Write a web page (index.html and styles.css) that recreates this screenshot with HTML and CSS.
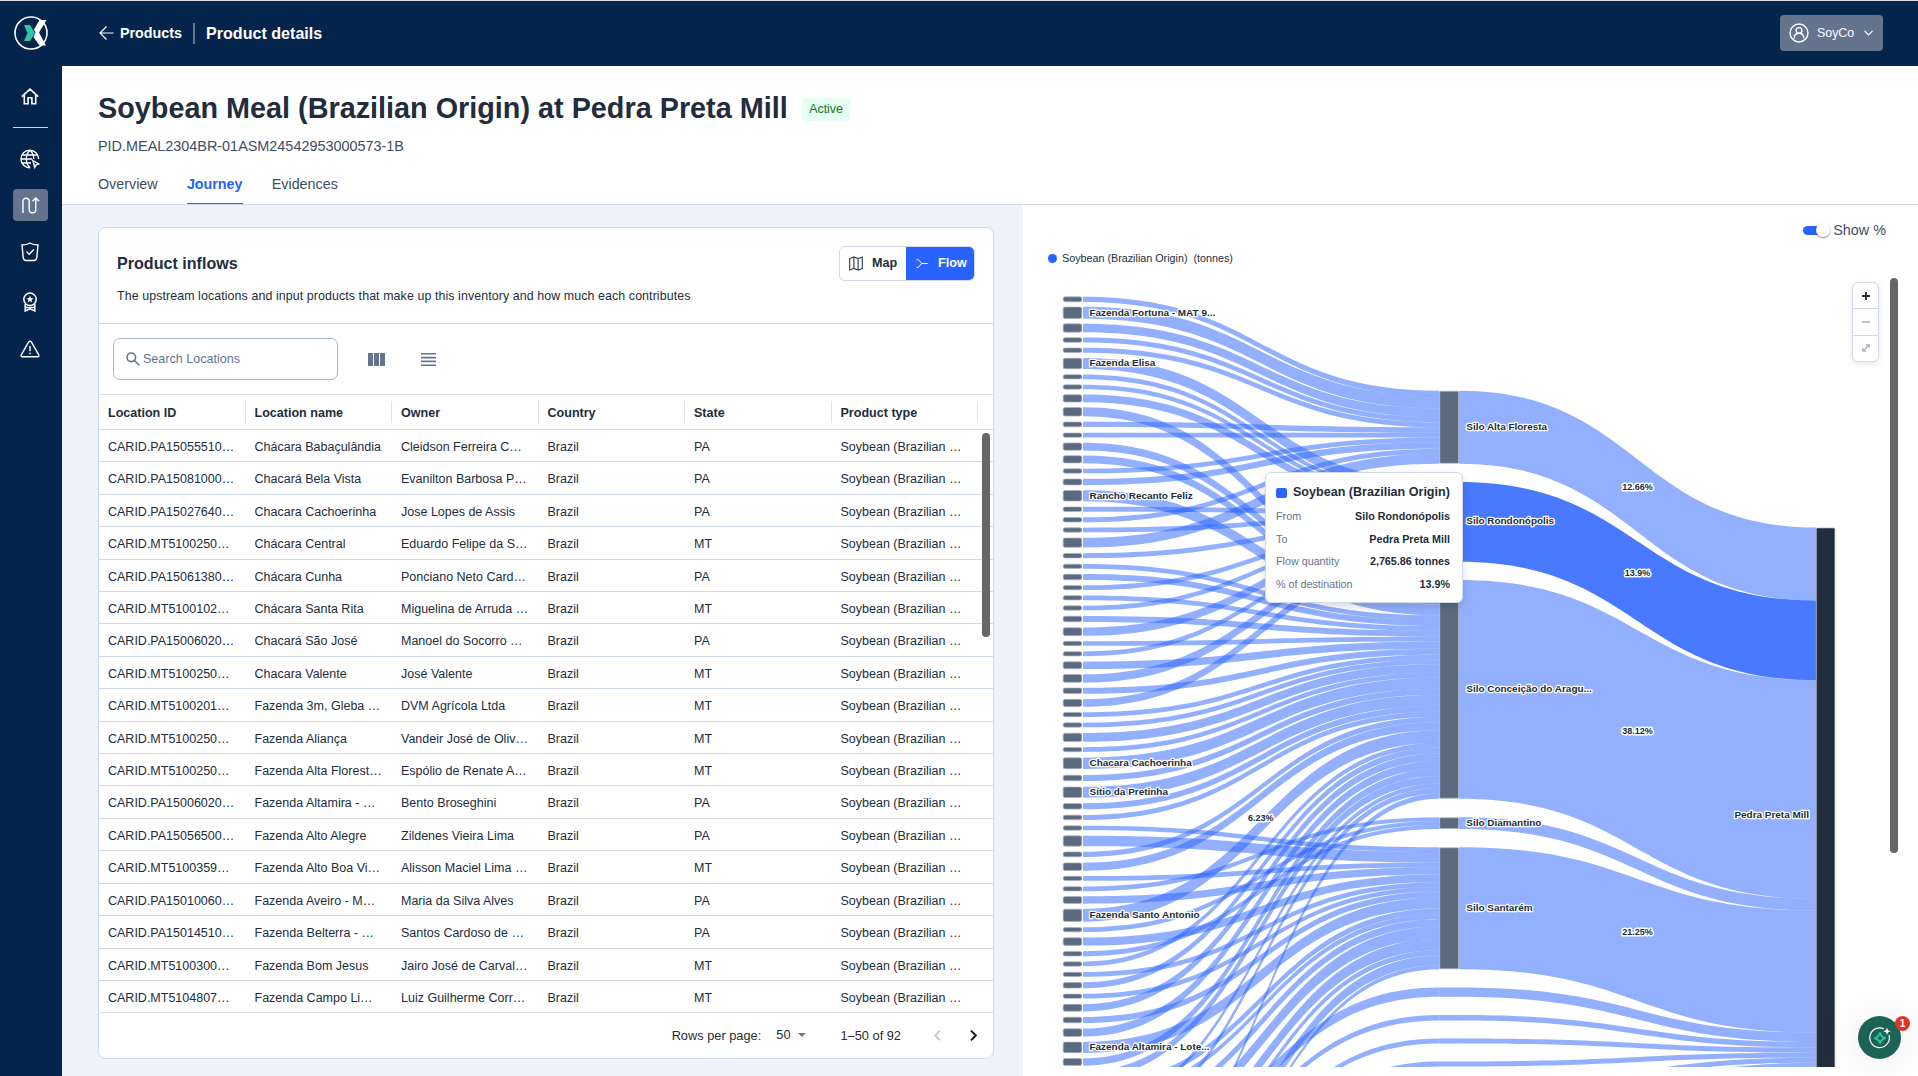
FILE: index.html
```html
<!DOCTYPE html>
<html lang="en">
<head>
  <meta charset="UTF-8">
  <meta name="viewport" content="width=device-width, initial-scale=1.0">
  <title>Product details</title>
  <link rel="stylesheet" href="styles.css">
</head>
<body>
  <header class="topbar">
    <div class="logo">
      <svg width="36" height="36" viewBox="0 0 36 36" fill="none">
        <circle cx="18" cy="18" r="16" stroke="#fff" stroke-width="1.6"/>
        <path d="M11 10h6l5 8-5 8h-6l3.500-8z" fill="#2ec4a6"/>
        <path d="M26.500 5h7l-7.500 12.500L33 30.500h-6.500L20.500 22l2-4.500-1.500-3z" fill="#fff"/>
      </svg>
    </div>
    <a class="back">
      <svg width="15" height="14" viewBox="0 0 15 14" fill="none" stroke="#fff" stroke-width="1.200"><path d="M14.500 7H1M7.500.5L1 7l6.500 6.500"/></svg>
      <span>Products</span>
    </a>
    <span class="topbar-divider"></span>
    <span class="topbar-title">Product details</span>
    <button class="account">
      <svg width="20" height="20" viewBox="0 0 20 20" fill="none" stroke="#fff" stroke-width="1.400">
        <circle cx="10" cy="10" r="9"/><circle cx="10" cy="7.500" r="2.900"/><path d="M5.200 15.500c0-3 1.600-5.200 4.800-5.200s4.800 2.200 4.800 5.200"/>
      </svg>
      <span>SoyCo</span>
      <svg width="9" height="6" viewBox="0 0 9 6" fill="none" stroke="#fff" stroke-width="1.200"><path d="M.5.8l4 4 4-4"/></svg>
    </button>
  </header>

  <div class="layout">
    <nav class="sidebar">
      <a class="nav-item home">
        <svg width="18" height="17" viewBox="0 0 18 17" fill="none" stroke="#fff" stroke-width="1.600"><path d="M.8 8.600L9 1.200l8.200 7.400M3.300 7v8.700h3.800V9.800h3.800v5.900h3.800V7"/></svg>
      </a>
      <span class="nav-divider"></span>
      <a class="nav-item globe">
        <svg width="20" height="20" viewBox="0 0 20 20" fill="none" stroke="#fff" stroke-width="1.400">
          <path d="M18.600 10A8.800 8.800 0 1 0 10 18.800M1.200 10h11M2.300 6h15.400M2.300 14H11M10 1.200C5 6 5 14 10 18.800M10 1.200c2.500 2.300 3.800 5.400 3.800 8.800"/>
          <path d="M12.800 11.500l6 3.500-2.700.8-1.300 2.500z"/>
        </svg>
      </a>
      <a class="nav-item active">
        <svg width="18" height="17" viewBox="0 0 18 17" fill="none" stroke="#fff" stroke-width="1.400"><path d="M1 16V4.500C1 2.500 2 1.200 4 1.200s3.200 1.300 3.200 3.300v8c0 2 1 3.300 3.200 3.300s3.400-1.300 3.400-3.300V1M10.500 4.300L13.800 1l3.300 3.300"/></svg>
      </a>
      <a class="nav-item shield">
        <svg width="18" height="20" viewBox="0 0 18 20" fill="none" stroke="#fff" stroke-width="1.400"><path d="M1 3c3 0 5.500-.5 8-2 2.500 1.500 5 2 8 2l-1.200 12.500c-.2 2-1.300 3-3 3H5.200c-1.700 0-2.800-1-3-3zM5.500 9.500l2.700 2.800 4.600-4.800"/></svg>
      </a>
      <a class="nav-item award">
        <svg width="14" height="20" viewBox="0 0 14 20" fill="none" stroke="#fff" stroke-width="1.500"><circle cx="7" cy="7.300" r="6.200"/><path d="M2.200 12v7L7 16.800l4.800 2.200v-7M2.500 15.500h9"/><path d="M7 3.800l1 2.300 2.500.2-1.900 1.600.6 2.500L7 9.100l-2.200 1.300.6-2.500-1.900-1.600 2.500-.2z" fill="#fff" stroke="none"/></svg>
      </a>
      <a class="nav-item">
        <svg width="20" height="18" viewBox="0 0 20 18" fill="none" stroke="#fff" stroke-width="1.400" stroke-linejoin="round"><path d="M10 1.200c.8 0 1.100.4 1.500 1l7.200 12.600c.6 1.200.1 2-1.200 2h-15c-1.300 0-1.800-.8-1.200-2L8.500 2.200c.4-.6.700-1 1.500-1zM10 6v5.300M10 12.800v1.400"/></svg>
      </a>
    </nav>

    <main class="main">
      <section class="page-head">
        <div class="title-row">
          <h1>Soybean Meal (Brazilian Origin) at Pedra Preta Mill</h1>
          <span class="badge">Active</span>
        </div>
        <p class="pid">PID.MEAL2304BR-01ASM24542953000573-1B</p>
        <div class="tabs">
          <a class="tab">Overview</a>
          <a class="tab selected">Journey</a>
          <a class="tab">Evidences</a>
        </div>
      </section>

      <div class="panes">
        <section class="left-pane">
          <div class="card">
            <div class="card-head">
              <div>
                <h2>Product inflows</h2>
                <p>The upstream locations and input products that make up this inventory and how much each contributes</p>
              </div>
              <div class="switcher">
                <button class="view-map">
                  <svg width="14" height="15" viewBox="0 0 14 15" fill="none" stroke="#33475b" stroke-width="1.200"><path d="M.7 2.500L4.900 1l4.200 1.500L13.300 1v11.500L9.100 14l-4.200-1.500L.7 14zM4.900 1v11.500M9.100 2.500V14"/></svg>
                  Map
                </button>
                <button class="view-flow">
                  <svg width="12" height="9" viewBox="0 0 12 9" fill="none" stroke="#fff" stroke-width="1"><path d="M.5.700h2l3.200 3.800h6M.5 8.300h2l3.200-3.800"/></svg>
                  Flow
                </button>
              </div>
            </div>

            <div class="toolbar">
              <div class="search">
                <svg width="14" height="14" viewBox="0 0 14 14" fill="none" stroke="#64748f" stroke-width="1.600"><circle cx="5.300" cy="5.300" r="4.300"/><path d="M8.500 8.500l4.800 4.800"/></svg>
                <span>Search Locations</span>
              </div>
              <svg class="tool-columns" width="17" height="13" viewBox="0 0 17 13" fill="#64748f"><path d="M0 0h5v13H0zM6 0h5v13H6zM12 0h5v13h-5z"/></svg>
              <svg class="tool-density" width="15" height="13" viewBox="0 0 15 13" fill="#64748f"><path d="M0 0h15v1.600H0zM0 3.800h15v1.600H0zM0 7.600h15v1.600H0zM0 11.400h15V13H0z"/></svg>
            </div>

            <div class="table">
              <div class="thead">
                <span>Location ID</span><span>Location name</span><span>Owner</span><span>Country</span><span>State</span><span>Product type</span>
              </div>
              <div id="rows"></div>
              <div class="table-scroll"></div>
            </div>

            <div class="pagination">
              <span class="rpp">Rows per page:</span>
              <span class="rpp-value">50</span>
              <span class="caret"></span>
              <span class="range">1–50 of 92</span>
              <svg class="prev" width="7" height="11" viewBox="0 0 7 11" fill="none" stroke="#bdbdbd" stroke-width="1.600"><path d="M6 .7L1.200 5.500 6 10.300"/></svg>
              <svg width="7" height="11" viewBox="0 0 7 11" fill="none" stroke="#111" stroke-width="1.900"><path d="M1 .7l4.800 4.800L1 10.300"/></svg>
            </div>
          </div>
        </section>

        <section class="right-pane">
          <div class="toggle-row">
            <span class="toggle"><span class="knob"></span></span>
            <span>Show %</span>
          </div>
          <div class="legend"><span class="dot"></span>Soybean (Brazilian Origin)&nbsp; (tonnes)</div>
          <div class="chart">
            <svg id="sankey" width="855" height="787" viewBox="1023 280 855 787"></svg>
            <div class="tooltip">
              <div class="tooltip-title"><span class="swatch"></span>Soybean (Brazilian Origin)</div>
              <div class="tooltip-row"><span>From</span><b>Silo Rondonópolis</b></div>
              <div class="tooltip-row"><span>To</span><b>Pedra Preta Mill</b></div>
              <div class="tooltip-row"><span>Flow quantity</span><b>2,765.86 tonnes</b></div>
              <div class="tooltip-row"><span>% of destination</span><b>13.9%</b></div>
            </div>
            <div class="zoom-controls">
              <span><svg width="8" height="8" viewBox="0 0 8 8" stroke="#212d3d" stroke-width="1.800"><path d="M4 0v8M0 4h8"/></svg></span>
              <span><svg width="8" height="8" viewBox="0 0 8 8" stroke="#a3afc2" stroke-width="1.500"><path d="M0 4h8"/></svg></span>
              <span><svg width="8" height="8" viewBox="0 0 8 8" fill="none" stroke="#a3afc2" stroke-width="1.200"><path d="M1 7l6-6M4 .8h3.200V4M4 7.200H.8V4"/></svg></span>
            </div>
            <div class="chart-scroll"></div>
          </div>
        </section>
      </div>
    </main>
  </div>

  <div class="assistant">
    <svg width="22" height="22" viewBox="0 0 22 22" fill="none">
      <path d="M20 8a9.800 9.800 0 1 1-5-6" stroke="#fff" stroke-width="1.200"/>
      <path d="M11 5.500c.7 3.300 2 4.700 5.500 5.500-3.500.8-4.800 2.200-5.500 5.500-.7-3.300-2-4.700-5.500-5.500 3.500-.8 4.800-2.200 5.500-5.500z" stroke="#2ec4a6" stroke-width="1.900"/>
      <path d="M18 .5l1 2.700 2.800 1-2.800 1L18 8l-1-2.800-2.800-1 2.800-1z" fill="#fff"/>
    </svg>
    <span class="count">1</span>
  </div>

  <script src="script.js"></script>
</body>
</html>
```
FILE: styles.css
```css
* {
  box-sizing: border-box;
}
body {
  margin: 0;
  height: 1076px;
  overflow: hidden;
  display: flex;
  flex-direction: column;
  font-family: "Liberation Sans", Arial, sans-serif;
  color: #212d3d;
  background: #fff;
}
h1, h2, p {
  margin: 0;
}
button {
  font-family: inherit;
  border: none;
}
svg {
  display: block;
  flex: none;
}

/* top bar */
.topbar {
  height: 66px;
  flex: none;
  display: flex;
  align-items: center;
  padding-bottom: 1px;
  background: #04244c;
  border-top: 1px solid #d8dbdf;
  color: #fff;
  font-weight: bold;
}
.logo {
  width: 62px;
  padding-left: 13px;
}
.back {
  display: flex;
  align-items: center;
  gap: 6px;
  margin-left: 37px;
  font-size: 14.300px;
}
.topbar-divider {
  width: 2px;
  height: 21px;
  margin: 0 11px 0 11px;
  background: #64748f;
}
.topbar-title {
  font-size: 16.100px;
}
.account {
  display: flex;
  align-items: center;
  width: 103px;
  height: 36px;
  margin-left: auto;
  margin-right: 35px;
  padding: 0 10px 0 9px;
  border-radius: 4px;
  background: #64748f;
  color: #fff;
  font-size: 12.400px;
}
.account span {
  margin-left: 8px;
  margin-right: auto;
}

/* sidebar */
.layout {
  flex: 1;
  display: flex;
  min-height: 0;
}
.sidebar {
  width: 62px;
  flex: none;
  display: flex;
  flex-direction: column;
  align-items: center;
  padding: 14px 1px 0 0;
  background: #04244c;
}
.nav-item {
  width: 35px;
  height: 32px;
  display: flex;
  align-items: center;
  justify-content: center;
  border-radius: 4px;
  margin-bottom: 15px;
  margin-right: 2px;
}
.nav-divider {
  width: 35px;
  height: 1px;
  background: #cbd5e3;
  margin-bottom: 15px;
}
.nav-item.active {
  margin-right: 0;
  background: #64748f;
}
.nav-item.globe {
  margin-bottom: 14px;
}
.nav-item.shield {
  margin-bottom: 18px;
}

/* page heading */
.main {
  flex: 1;
  display: flex;
  flex-direction: column;
  min-width: 0;
}
.page-head {
  height: 139px;
  flex: none;
  display: flex;
  flex-direction: column;
  padding: 23px 36px 0;
  border-bottom: 1px solid #d0dae8;
}
.title-row {
  display: flex;
  align-items: center;
  height: 38px;
}
h1 {
  font-size: 28.800px;
  line-height: 38px;
  white-space: nowrap;
}
.badge {
  margin: 2px 0 0 14px;
  padding: 0 7.500px;
  line-height: 23px;
  border-radius: 4px;
  background: #e6fdf3;
  color: #0c7a1f;
  font-size: 12.400px;
}
.pid {
  margin-top: 10px;
  font-size: 14.420px;
  line-height: 18px;
  color: #3d4e63;
}
.tabs {
  display: flex;
  gap: 29.300px;
  margin-top: auto;
}
.tab {
  height: 30px;
  font-size: 14.300px;
  line-height: 21px;
  color: #3d4e63;
}
.tab.selected {
  color: #2563fa;
  font-weight: bold;
  border-bottom: 1px solid #2563fa;
}

/* inflows card */
.panes {
  flex: 1;
  display: flex;
  min-height: 0;
}
.left-pane {
  width: 961px;
  flex: none;
  padding: 22px 29px 17px 36px;
  background: #edf2fb;
}
.card {
  height: 832px;
  display: flex;
  flex-direction: column;
  border: 1px solid #d0dae8;
  border-radius: 8px;
  background: #fff;
}
.card-head {
  height: 96px;
  display: flex;
  justify-content: space-between;
  padding: 18px 18px 0;
  border-bottom: 1px solid #d0dae8;
}
h2 {
  margin-top: 6px;
  font-size: 16.100px;
  line-height: 22px;
}
.card-head p {
  margin-top: 14px;
  font-size: 12.400px;
  letter-spacing: 0.095px;
  line-height: 16px;
}
.switcher {
  display: flex;
  width: 136px;
  height: 35px;
  border: 1px solid #d0dae8;
  border-radius: 6px;
  overflow: hidden;
}
.switcher button {
  display: flex;
  align-items: center;
  padding: 0 0 1px;
  background: #fff;
  color: #212d3d;
  font-size: 12.600px;
  font-weight: bold;
}
.switcher .view-map {
  width: 66px;
  padding-left: 9px;
  gap: 9px;
}
.switcher .view-flow {
  width: 68px;
  padding-left: 10px;
  gap: 10px;
  background: #2862ff;
  color: #fff;
}
.toolbar {
  height: 71px;
  display: flex;
  align-items: center;
  padding-left: 14px;
  border-bottom: 1px solid #d9dee6;
}
.search {
  width: 225px;
  height: 42px;
  display: flex;
  align-items: center;
  gap: 3px;
  padding-left: 12px;
  border: 1px solid #a9b6ca;
  border-radius: 7px;
  color: #64748f;
  font-size: 12.550px;
}
.tool-columns {
  margin-left: 30px;
}
.tool-density {
  margin-left: 36px;
}
.table {
  position: relative;
  height: 618px;
  overflow: hidden;
  border-bottom: 1px solid #d9dee6;
}
.thead, .row {
  display: grid;
  grid-template-columns: repeat(6, 146.500px);
  padding-left: 9px;
  border-bottom: 1px solid #d0dae8;
  white-space: nowrap;
}
.thead {
  height: 35px;
  align-items: center;
  font-size: 12.550px;
  font-weight: bold;
}
.thead span {
  margin-right: 9px;
  padding-top: 2px;
  line-height: 20px;
  border-right: 1px solid #dde4ee;
}
.row {
  height: 32.410px;
  line-height: 35px;
  font-size: 12.500px;
}
.table-scroll {
  position: absolute;
  top: 38px;
  right: 3px;
  width: 8px;
  height: 204px;
  border-radius: 4px;
  background: #666;
}
.pagination {
  flex: 1;
  display: flex;
  align-items: center;
  justify-content: flex-end;
  padding: 0 16px 1px 0;
  font-size: 12.800px;
  color: #2b2b2b;
}
.rpp {
  margin-right: 15px;
}
.rpp-value {
  margin-right: 7px;
  padding-bottom: 2px;
}
.caret {
  border: 4.500px solid transparent;
  border-top-color: #757575;
  border-bottom: none;
  margin-right: 35px;
}
.prev {
  margin: 0 29px 0 33px;
}

/* flow chart */
.right-pane {
  flex: 1;
  min-width: 0;
}
.toggle-row {
  height: 41px;
  display: flex;
  align-items: center;
  gap: 3px;
  padding: 9px 32px 0 0;
  justify-content: flex-end;
  color: #3d4e63;
  font-size: 14.400px;
}
.toggle {
  display: flex;
  align-items: center;
  justify-content: flex-end;
  width: 27px;
  height: 9px;
  border-radius: 5px;
  background: linear-gradient(90deg, #2862ff 70%, transparent 70%);
}
.knob {
  width: 14px;
  height: 14px;
  border-radius: 50%;
  background: #fff;
  box-shadow: 0 1px 2px rgba(0, 0, 0, 0.45);
}
.legend {
  height: 34px;
  display: flex;
  align-items: center;
  padding: 0 0 10px 25px;
  font-size: 10.750px;
}
.dot {
  width: 9px;
  height: 9px;
  margin-right: 5px;
  border-radius: 50%;
  background: #2862ff;
}
.chart {
  position: relative;
}
#sankey text {
  font-weight: bold;
  font-size: 9.950px;
  fill: #212d3d;
  stroke: #fff;
  stroke-width: 2.500px;
  stroke-linejoin: round;
  paint-order: stroke;
}
#sankey text.pct {
  font-size: 9px;
  stroke-width: 3px;
}
.link {
  fill: #2862ff;
  fill-opacity: 0.5;
}
.link.hover {
  fill-opacity: 0.85;
}
.node {
  fill: #5c6a80;
  stroke: #a8b2c2;
  stroke-width: 0.700px;
}
.node.mill {
  fill: #212d3d;
}
.tooltip {
  position: absolute;
  left: 242px;
  top: 192px;
  width: 198px;
  height: 131px;
  padding: 7px 12px 0 10px;
  border: 1px solid #d0dae8;
  border-radius: 6px;
  background: #fff;
  box-shadow: 0 4px 10px rgba(0, 0, 0, 0.14);
}
.tooltip-title {
  display: flex;
  align-items: center;
  height: 24px;
  margin-bottom: 1px;
  font-size: 12.560px;
  font-weight: bold;
  white-space: nowrap;
}
.swatch {
  width: 11px;
  height: 10px;
  margin: 2px 6px 0 0;
  border-radius: 2px;
  background: #2862ff;
}
.tooltip-row {
  display: flex;
  justify-content: space-between;
  line-height: 22.500px;
  font-size: 10.750px;
}
.tooltip-row span {
  color: #64748f;
}
.zoom-controls {
  position: absolute;
  left: 829px;
  top: 2px;
  width: 27px;
  height: 80px;
  display: flex;
  flex-direction: column;
  border: 1px solid #d0dae8;
  border-radius: 6px;
  background: #fff;
  box-shadow: 0 2px 6px rgba(0, 0, 0, 0.1);
}
.zoom-controls span {
  flex: 1;
  display: flex;
  align-items: center;
  justify-content: center;
}
.zoom-controls span + span {
  border-top: 1px solid #d0dae8;
}
.chart-scroll {
  position: absolute;
  left: 867px;
  top: -2px;
  width: 8px;
  height: 575px;
  border-radius: 4px;
  background: #666;
}

/* chat bubble */
.assistant {
  position: absolute;
  right: 17px;
  bottom: 17px;
  width: 43px;
  height: 43px;
  display: flex;
  align-items: center;
  justify-content: center;
  border-radius: 50%;
  background: #1b6355;
  box-shadow: 0 2px 40px 6px rgba(0, 0, 0, 0.07);
}
.count {
  position: absolute;
  right: -9px;
  top: 0;
  width: 15px;
  height: 15px;
  border-radius: 50%;
  background: #e0342b;
  color: #fff;
  font-size: 10px;
  font-weight: bold;
  line-height: 15px;
  text-align: center;
}
```
FILE: script.js
```js
const locations = [
  ['PA15055510', 'Chácara Babaçulândia', 'Cleidson Ferreira C…', 'PA'],
  ['PA15081000', 'Chacará Bela Vista', 'Evanilton Barbosa P…', 'PA'],
  ['PA15027640', 'Chacara Cachoerinha', 'Jose Lopes de Assis', 'PA'],
  ['MT5100250', 'Chácara Central', 'Eduardo Felipe da S…', 'MT'],
  ['PA15061380', 'Chácara Cunha', 'Ponciano Neto Card…', 'PA'],
  ['MT5100102', 'Chácara Santa Rita', 'Miguelina de Arruda …', 'MT'],
  ['PA15006020', 'Chacará São José', 'Manoel do Socorro …', 'PA'],
  ['MT5100250', 'Chacara Valente', 'José Valente', 'MT'],
  ['MT5100201', 'Fazenda 3m, Gleba …', 'DVM Agrícola Ltda', 'MT'],
  ['MT5100250', 'Fazenda Aliança', 'Vandeir José de Oliv…', 'MT'],
  ['MT5100250', 'Fazenda Alta Florest…', 'Espólio de Renate A…', 'MT'],
  ['PA15006020', 'Fazenda Altamira - …', 'Bento Broseghini', 'PA'],
  ['PA15056500', 'Fazenda Alto Alegre', 'Zildenes Vieira Lima', 'PA'],
  ['MT5100359', 'Fazenda Alto Boa Vi…', 'Alisson Maciel Lima …', 'MT'],
  ['PA15010060', 'Fazenda Aveiro - M…', 'Maria da Silva Alves', 'PA'],
  ['PA15014510', 'Fazenda Belterra - …', 'Santos Cardoso de …', 'PA'],
  ['MT5100300', 'Fazenda Bom Jesus', 'Jairo José de Carval…', 'MT'],
  ['MT5104807', 'Fazenda Campo Li…', 'Luiz Guilherme Corr…', 'MT']
];

document.getElementById('rows').innerHTML = locations.map(([id, name, owner, state]) =>
  `<div class="row"><span>CARID.${id}…</span><span>${name}</span><span>${owner}</span>` +
  `<span>Brazil</span><span>${state}</span><span>Soybean (Brazilian …</span></div>`
).join('');

// silos: top and bottom of the bar, label, share of the mill
const silos = {
  AF: { y0: 390.7, y1: 463.7, label: 'Silo Alta Floresta', pct: '12.66%' },
  RO: { y0: 482, y1: 561.7, label: 'Silo Rondonópolis', pct: '13.9%', hover: true },
  CA: { y0: 580, y1: 798.7, label: 'Silo Conceição do Aragu...', pct: '38.12%' },
  DI: { y0: 817.3, y1: 829, label: 'Silo Diamantino' },
  SA: { y0: 847.3, y1: 969.3, label: 'Silo Santarém', pct: '21.25%' },
  P1: { y0: 987.5, y1: 996.8, pass: true },
  P2: { y0: 1015, y1: 1020.6, pass: true },
  P3: { y0: 1038.4, y1: 1043.6, pass: true },
  P4: { y0: 1061.5, y1: 1066.5, pass: true },
  P5: { y0: 1085, y1: 1090, pass: true },
  P6: { y0: 1109, y1: 1114, pass: true },
  P7: { y0: 1133, y1: 1138, pass: true }
};

// farms: centre, thickness, silo, label
const farms = [
  [299.3, 5.3, 'AF'], [312.8, 12, 'AF', 'Fazenda Fortuna - MAT 9...'], [328, 8.7, 'AF'], [340, 5, 'AF'],
  [350.3, 5, 'AF'], [363.5, 11, 'RO', 'Fazenda Elisa'], [376.8, 4.7, 'RO'], [387, 4.7, 'RO'],
  [398.4, 7.7, 'RO'], [411.8, 9, 'CA'], [424.4, 5.3, 'AF'], [435.2, 4.7, 'AF'],
  [446.6, 7.7, 'CA'], [459.3, 7.7, 'CA'], [471, 4.7, 'AF'], [482, 6.3, 'AF'],
  [495.8, 11, 'CA', 'Rancho Recanto Feliz'], [509.2, 5, 'RO'], [519.8, 5, 'AF'], [530, 4.7, 'RO'],
  [542.7, 9.7, 'AF'], [555.7, 5, 'RO'], [566.3, 4.7, 'CA'], [577, 6, 'CA'],
  [587.7, 4.7, 'RO'], [597.8, 4.7, 'CA'], [608, 4.7, 'RO'], [619, 6, 'CA'],
  [631.7, 8.3, 'RO'], [643.5, 4.7, 'CA'], [653.8, 4.7, 'RO'], [665.3, 7.3, 'CA'],
  [678.4, 8.3, 'RO'], [690.8, 6, 'CA'], [703, 7.7, 'RO'], [714.6, 4.7, 'CA'],
  [725, 4.7, 'CA'], [737.4, 8.7, 'CA'], [749.6, 4.7, 'CA'], [763.3, 11.3, 'CA', 'Chacara Cachoerinha'],
  [778, 6, 'CA'], [792.3, 11, 'CA', 'Sítio da Pretinha'], [806.3, 6, 'CA'], [817.5, 5, 'CA'],
  [828, 4.7, 'SA'], [841, 10.7, 'SA'], [854.4, 5.3, 'CA'], [866.7, 8, 'CA'],
  [878.4, 4.7, 'SA'], [888.8, 4.7, 'DI'], [900, 7.3, 'SA'], [915.3, 12.7, 'CA', 'Fazenda Santo Antonio', '6.23%'],
  [929.7, 4.7, 'DI'], [941.6, 8, 'SA'], [953.7, 5, 'DI'], [964, 4.7, 'CA'],
  [974.4, 4.7, 'SA'], [985.3, 6, 'CA'], [996.2, 4.7, 'SA'], [1007.8, 7.3, 'CA'],
  [1020, 6, 'SA'], [1032.6, 8, 'CA'], [1047.4, 11, 'SA', 'Fazenda Altamira - Lote...'], [1062, 7.3, 'CA'],
  [1075, 7.3, 'CA'], [1087.5, 6, 'SA'], [1099, 5, 'SA'], [1109.5, 4.7, 'CA'],
  [1121.5, 7.3, 'SA'], [1133.5, 5.3, 'CA'], [1148, 12.3, 'SA'], [1166.5, 9.3, 'P1'],
  [1179.5, 11.7, 'SA'], [1193, 5.5, 'P2'], [1204.5, 5.3, 'SA'], [1215.5, 5.3, 'CA'],
  [1224.5, 5, 'P3'], [1237, 10, 'SA'], [1250, 5, 'P4'], [1260, 4, 'SA']
];

const X0 = 1083, X1 = 1439.5, X2 = 1459, X3 = 1816;
const MILL_TOP = 527.5;

function ribbon(xa, a0, a1, xb, b0, b1, cls) {
  const m = (xa + xb) / 2;
  return `<path class="${cls}" d="M${xa} ${a0}C${m} ${a0} ${m} ${b0} ${xb} ${b0}V${b1}C${m} ${b1} ${m} ${a1} ${xa} ${a1}Z"/>`;
}

function drawSankey() {
  let links = '', nodes = '', labels = '';
  const total = {}, used = {};
  farms.forEach(([, h, s]) => { total[s] = (total[s] || 0) + h; });

  farms.forEach(([y, h, s, label, pct]) => {
    const silo = silos[s];
    const hb = h * (silo.y1 - silo.y0) / total[s];
    const b0 = silo.y0 + (used[s] || 0);
    used[s] = (used[s] || 0) + hb;
    links += ribbon(X0, y - h / 2, y + h / 2, X1, b0, b0 + hb, 'link');
    nodes += `<rect class="node" x="1063.2" y="${y - h / 2 + 0.2}" width="18.6" height="${h - 0.4}" rx="1.8"/>`;
    if (label) labels += `<text x="1089.5" y="${y + 2.7}">${label}</text>`;
    if (pct) labels += `<text class="pct" text-anchor="middle" x="1260.7" y="821">${pct}</text>`;
  });

  let my = MILL_TOP;
  Object.values(silos).forEach(s => {
    const h = s.y1 - s.y0;
    // passing flows have no bar, so they run straight through the silo column
    if (s.pass) links += `<rect class="link" x="${X1}" y="${s.y0}" width="${X2 - X1}" height="${h}"/>`;
    links += ribbon(X2, s.y0, s.y1, X3, my, my + h, s.hover ? 'link hover' : 'link');
    if (!s.pass) nodes += `<rect class="node" x="1439.8" y="${s.y0 + 0.5}" width="18.8" height="${h - 1}" rx="1"/>`;
    if (s.label) labels += `<text x="1466.3" y="${(s.y0 + s.y1) / 2 + 2.4}">${s.label}</text>`;
    if (s.pct) labels += `<text class="pct" text-anchor="middle" x="1637.5" y="${(s.y0 + s.y1 + my + my + h) / 4 - 5.3}">${s.pct}</text>`;
    my += h;
  });
  nodes += `<rect class="node mill" x="1816.3" y="${MILL_TOP + 0.5}" width="18.6" height="700" rx="1"/>`;
  labels += `<text text-anchor="end" x="1809" y="818">Pedra Preta Mill</text>`;

  document.getElementById('sankey').innerHTML = links + nodes + labels;
}

drawSankey();
```
